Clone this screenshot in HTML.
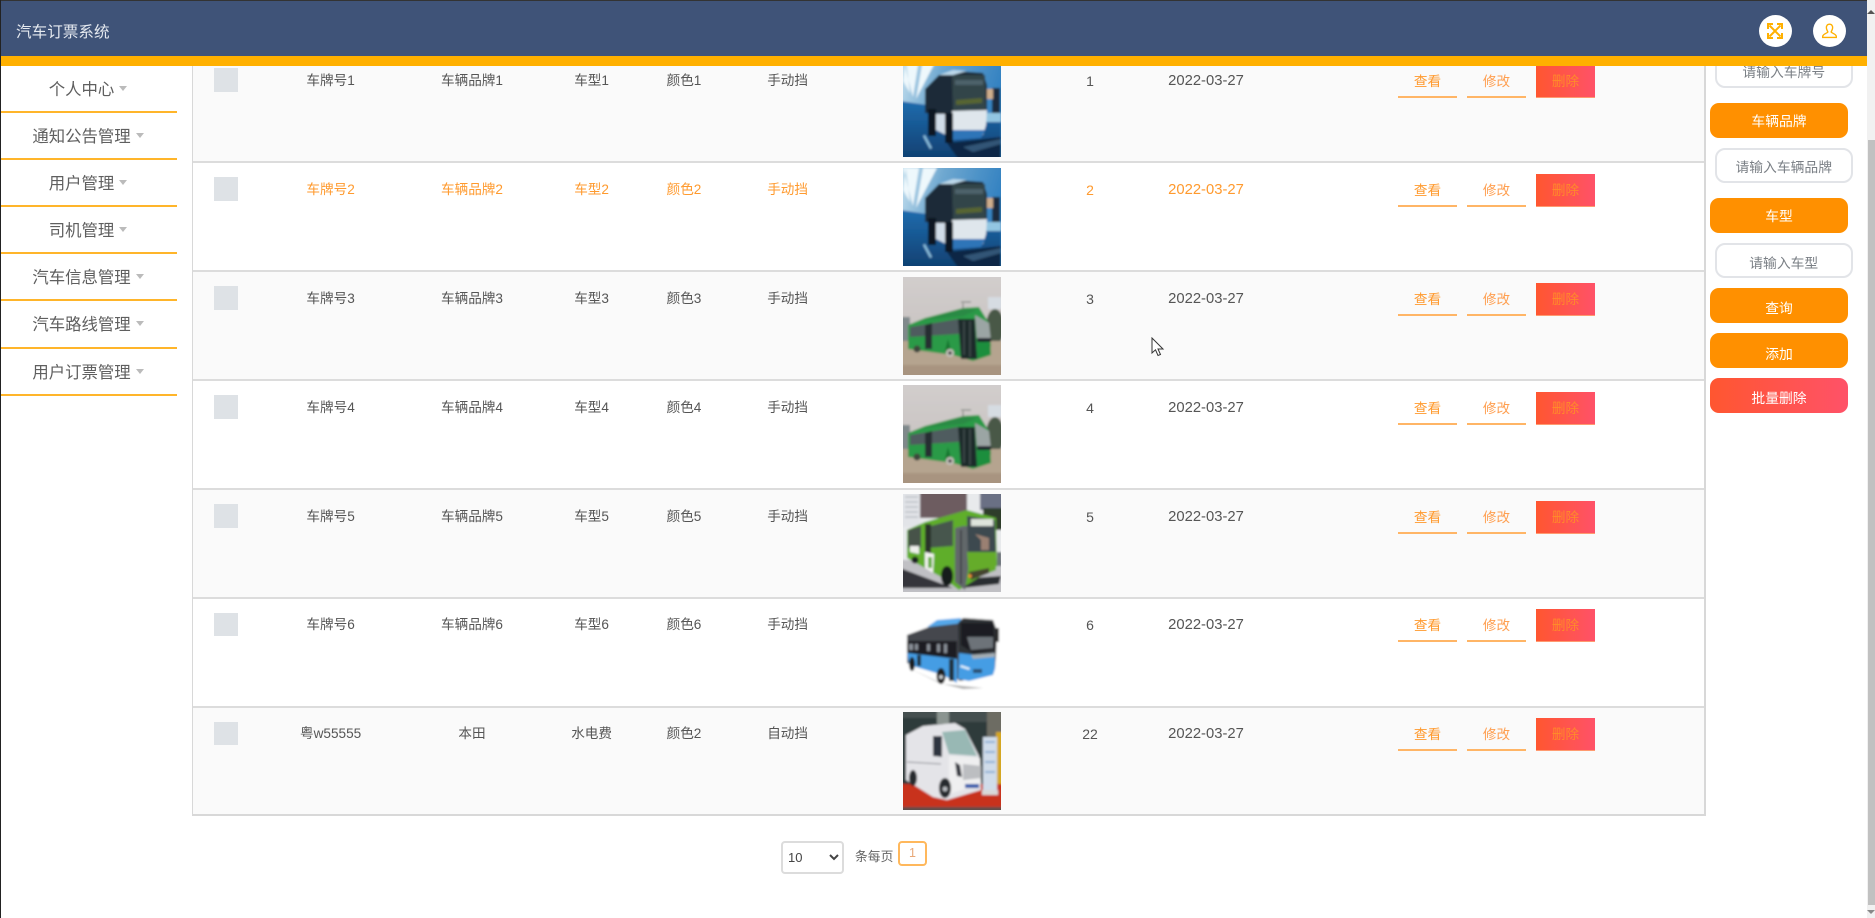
<!DOCTYPE html>
<html lang="zh"><head><meta charset="utf-8"><title>汽车订票系统</title>
<style>
*{box-sizing:border-box}
html,body{margin:0;padding:0;width:1875px;height:918px;overflow:hidden;background:#fff}
body{font-family:"Liberation Sans","Noto Sans CJK SC",sans-serif;color:#555;position:relative}
.ln{position:absolute;left:0;top:0;width:1px;height:918px;background:#222;z-index:6}
.hd{position:absolute;left:0;top:0;width:1867px;height:66px;z-index:5;background:#3f5378;border-top:1px solid #333;border-bottom:10px solid #ffb000}
.title{position:absolute;left:16px;top:22px;font-size:15.6px;line-height:20px;color:#e6eaf0}
.circ{position:absolute;top:14px;width:33px;height:32px;border-radius:50%;background:#fff}
.circ svg{position:absolute;left:8px;top:8px}
.side{position:absolute;left:0;top:65.5px;width:177px}
.side div{height:47.2px;border-bottom:2px solid #ffb52a;text-align:center;font-size:16.4px;line-height:48.5px;color:#5f5f5f;padding-right:1px}
.side i{display:inline-block;width:0;height:0;border:4.5px solid transparent;border-top:5px solid #bbb;border-bottom:0;margin-left:5px;vertical-align:4px}
.tb{position:absolute;left:192px;top:54px;width:1514px;height:762px;border:solid #d8d8d8;border-width:0 2px 2px 1px}
.r{position:absolute;left:0;width:1511px;height:108.9px;border-bottom:2px solid #dcdcdc;font-size:13.6px;background:#fff}
.o{background:#fafafa}
.h{color:#ff9a2e}
.r span{position:absolute;top:16.5px;line-height:20px;text-align:center;white-space:nowrap}
.cb{position:absolute;left:21px;top:14px;width:23.5px;height:23.5px;background:#dee2e6}
.s1{left:77.6px;width:120px}.s2{left:219px;width:120px}.s3{left:339.6px;width:118px}.s4{left:431px;width:120px}.s5{left:534.6px;width:120px}.s6{left:837px;width:120px;font-size:14px}.s7{left:953px;width:120px;font-size:14.8px}
.r svg{position:absolute;left:710px;top:4.4px;width:98px;height:98px}
.b{position:absolute;top:10.6px;height:33px;width:59px;text-align:center;font-size:13.6px;line-height:33px;color:#ff9a2e;border-bottom:2px solid #ffb566}
.b1{left:1205px}.b2{left:1274px;color:#ff9f50}.b3{left:1343px;background:linear-gradient(90deg,#ff5630,#ff5268);color:#ff8a2a;border-bottom:1px solid #ff9a70}
.btn,.inp{position:absolute;text-align:center;font-size:13.8px;white-space:nowrap}
.btn{left:1710px;width:138px;height:35px;border-radius:9px;background:#ff9000;color:#fff}
.inp{left:1715px;width:137.5px;height:35px;border-radius:10px;border:2px solid #e2e4e8;background:#fff;color:#7a7f85}
.sb{position:absolute;left:1867px;top:0;width:8px;height:918px;background:#f1f1f1;z-index:6}
.th{position:absolute;left:1px;top:140px;width:7px;height:765px;background:#c1c1c1}
.pg{position:absolute;left:898px;top:841px;width:29px;height:25px;border:2px solid #ffb85c;border-radius:4px;text-align:center;font-size:12.5px;line-height:21px;color:#e8a878}
select{position:absolute;left:781px;top:841px;width:63px;height:33px;border:2px solid #dcdcdc;border-radius:4px;background:#fff;font-size:13px;color:#444;font-family:"Liberation Sans",sans-serif;padding-left:1px}
</style></head><body>
<div class="ln"></div>
<svg width="0" height="0" style="position:absolute">
<defs>
<filter id="bl" x="-5%" y="-5%" width="110%" height="110%"><feGaussianBlur stdDeviation="1"/></filter>
<clipPath id="cp"><rect width="98" height="98"/></clipPath>
<linearGradient id="sk" x1="0" y1="0" x2="1" y2=".3"><stop offset="0" stop-color="#cfe6f2"/><stop offset=".4" stop-color="#6fa8d0"/><stop offset="1" stop-color="#2f7fc0"/></linearGradient>
<linearGradient id="rd" x1="0" y1="0" x2="0" y2="1"><stop offset="0" stop-color="#1f6cae"/><stop offset="1" stop-color="#0f3f70"/></linearGradient>
<linearGradient id="gr" x1="0" y1="0" x2="0" y2="1"><stop offset="0" stop-color="#d2cecd"/><stop offset="1" stop-color="#c3bdbb"/></linearGradient>

<symbol id="bus1" viewBox="0 0 98 98"><g clip-path="url(#cp)"><g filter="url(#bl)"><rect x="-3" y="-3" width="104" height="104" fill="url(#sk)"/>
<path d="M0 0L10 38 16 0zM20 0L13 40 34 0zM3 0L7 34 0 22z" fill="#eef8fc"/>
<path d="M-3 42L24 46 98 62V101H-3z" fill="url(#rd)"/>
<path d="M44 84L98 78V101H56z" fill="#0d2744"/><path d="M22 76l7 13-2 1-7-13z" fill="#8cc0de"/>
<rect x="89" y="29" width="8" height="26" fill="#1d2c3c"/><rect x="83" y="30" width="7" height="10" fill="#cfae8c"/><rect x="83" y="54" width="15" height="9" fill="#93c6e2"/>
<path d="M22 30L36 16 52 12 80 14 84 26 84 54 50 56 22 54z" fill="#1f2a38"/>
<path d="M36 16L50 11 64 12 50 16z" fill="#bcd8ea"/>
<path d="M49 16H82L83 50 50 53z" fill="#33444a"/><path d="M52 21H80V26H52z" fill="#4e626a"/><path d="M53 41l26-2v5l-26 2z" fill="#566530"/>
<path d="M49 52L84 51 83 66 80 76 50 76z" fill="#dfe6ec"/><path d="M50 71L82 71 78 79 50 81z" fill="#2f74b8"/>
<path d="M33 55H47V78L33 71z" fill="#d0dce8"/><rect x="25" y="50" width="8" height="27" fill="#0b1724"/><rect x="42" y="54" width="8" height="30" fill="#0b1724"/>
<path d="M60 88L98 80V85L70 93z" fill="#5f8fb4" opacity=".45"/></g></g></symbol>

<symbol id="bus2" viewBox="0 0 98 98"><g clip-path="url(#cp)"><g filter="url(#bl)"><rect x="-3" y="-3" width="104" height="104" fill="url(#gr)"/><rect x="85" y="20" width="14" height="12" fill="#d6dce2"/>
<rect x="-3" y="40" width="10" height="24" fill="#80898b"/><ellipse cx="92" cy="50" rx="9" ry="18" fill="#4a5846"/><rect x="-3" y="64" width="104" height="37" fill="#b5a48f"/><rect x="-3" y="88" width="104" height="13" fill="#a89480"/>
<path d="M5 48L22 41 60 31 76 30 86 46 88 78 70 84 50 78 5 72z" fill="#2b9a46"/>
<path d="M7 50L55 42H70V56L7 60z" fill="#505c5e"/><path d="M20 43L60 32 74 33 60 39z" fill="#2a8a44"/>
<path d="M55 42H72L74 82 58 82z" fill="#1f292c"/><path d="M61 44V78M67 44V80" stroke="#424e50" stroke-width="1.4"/>
<path d="M72 38L86 46 88 64 74 64z" fill="#9ba5a4"/><path d="M74 64L88 66 87 78 74 82z" fill="#1f8e3e"/><path d="M74 61H88V65H74z" fill="#1a242c"/>
<path d="M22 48v24h7V46z" fill="#262f30"/><path d="M45 62l-3 12 3 2 3-2z" fill="#15752f"/>
<circle cx="47" cy="76" r="4" fill="#c5c1bc"/><circle cx="47" cy="76" r="1.8" fill="#333"/><circle cx="14" cy="72" r="3.5" fill="#3c463e"/>
<path d="M60 26v6M58 25h10" stroke="#6a736c" stroke-width="1"/></g></g></symbol>

<symbol id="bus3" viewBox="0 0 98 98"><g clip-path="url(#cp)"><g filter="url(#bl)"><rect x="-3" y="-3" width="104" height="104" fill="#e8eaec"/>
<rect x="-3" y="-3" width="20" height="36" fill="#e2e4e8"/><path d="M2 3h13M2 8h13M2 13h13M2 18h13M2 23h13" stroke="#b2b7be" stroke-width="1.2"/>
<rect x="17" y="-3" width="47" height="27" fill="#6d5c60"/><rect x="77" y="-3" width="24" height="19" fill="#6a7084"/><rect x="80" y="14" width="21" height="22" fill="#2e3e2c"/>
<rect x="-3" y="66" width="104" height="35" fill="#c0c0c4"/><path d="M-3 74L50 94 -3 94z" fill="#34353a"/><path d="M40 86L98 82 96 90 60 94z" fill="#2c2d31"/>
<path d="M4 36L22 28 64 16 93 24 94 72 78 82 56 96 40 84 4 64z" fill="#5fae2a"/>
<path d="M24 33L50 26V52L24 54z" fill="#46564e"/><path d="M5 36L18 32V54H5z" fill="#475248"/><path d="M7 52H16V60L7 58z" fill="#eef0ec"/>
<path d="M22 30V66L28 70V30z" fill="#2a322c"/>
<path d="M22 58L31 60 30 79 22 74z" fill="#f4f4f2"/><path d="M25 63h4v11h-4z" fill="#64ad3c"/>
<path d="M52 34L60 32 66 32V70L62 96 52 88z" fill="#62676a"/><path d="M58 36V90" stroke="#2a2e30" stroke-width="1.2"/>
<path d="M64 22L92 26 93 58 65 58z" fill="#3c4a50"/><path d="M68 25h22v7H68z" fill="#dfe4dc"/><path d="M72 40l6 6v10h8V44z" fill="#9a8072"/>
<path d="M64 58H93V76L78 82 66 84z" fill="#65ac2c"/><path d="M66 78l20-4v5L68 86z" fill="#45442e"/><circle cx="67" cy="82" r="1.8" fill="#ea8a30"/>
<ellipse cx="44" cy="82" rx="6" ry="10" fill="#181b1d"/><circle cx="12" cy="66" r="3.5" fill="#1f2223"/><rect x="94" y="58" width="5" height="14" fill="#6a7278"/></g></g></symbol>

<symbol id="bus4" viewBox="0 0 98 98"><g clip-path="url(#cp)"><g filter="url(#bl)"><rect x="-3" y="-3" width="104" height="104" fill="#fff"/>
<path d="M8 66L40 81 80 85 60 86 36 80z" fill="#666" opacity=".5"/>
<path d="M24 24L34 17 58 15 58 22z" fill="#55a8ea"/><path d="M4 32L26 24 60 20 60 78 40 72 4 60z" fill="#45474d"/>
<path d="M4 38L54 38 54 56 4 50z" fill="#1c1e22"/><path d="M6 41h4v6H6zM12 41h3v6h-3zM24 41h3v7h-3zM34 41h3v8h-3zM41 41h3v9h-3z" fill="#8a9098"/>
<path d="M4 50L54 56V80L40 72 6 62z" fill="#459de4"/><path d="M14 52v11h4V52zM46 56v22h5V56z" fill="#22303e"/>
<path d="M60 15L90 17 94 28 93 52 92 66 84 72 56 78 55 20z" fill="#2e3136"/><path d="M58 20H90L92 46 70 50 58 42z" fill="#1d1f23"/><path d="M64 34H90V45L68 47z" fill="#6d7379"/>
<path d="M56 50L72 52 92 50V66L90 72 66 78 55 76z" fill="#459de4"/><path d="M68 52L92 50V54L70 56z" fill="#a4adb4"/><rect x="70" y="66" width="9" height="4" fill="#2f5070"/><path d="M58 62l9 3-1 2-9-3z" fill="#e4f2fb"/>
<ellipse cx="38" cy="73" rx="4.5" ry="8" fill="#1a1b1e"/><circle cx="38" cy="74" r="2" fill="#c8ccd0"/><ellipse cx="9" cy="61" rx="3" ry="7" fill="#1a1b1e"/>
<rect x="92" y="25" width="4" height="14" fill="#2a2a2a"/></g></g></symbol>

<symbol id="bus5" viewBox="0 0 98 98"><g clip-path="url(#cp)"><g filter="url(#bl)"><rect x="-3" y="-3" width="104" height="104" fill="#2f3a3a"/>
<path d="M-3 -3H34V6H-3zM46 -3H86V10H46z" fill="#45504f"/><rect x="34" y="-3" width="12" height="15" fill="#8b9490"/><rect x="84" y="-3" width="17" height="30" fill="#6d6c64"/><rect x="93" y="20" width="8" height="55" fill="#d4a622"/>
<rect x="-3" y="72" width="104" height="24" fill="#c8321c"/><rect x="-3" y="95" width="104" height="6" fill="#5e4e48"/>
<rect x="80" y="25" width="14" height="55" fill="#d0dcea"/><path d="M82 30h10M82 40h10M82 50h10M82 60h10" stroke="#8fb0d4" stroke-width="2"/><rect x="79" y="78" width="16" height="5" fill="#d8d8d8"/>
<path d="M3 23L20 14 52 11 62 17 76 44 78 78 44 88 30 85 3 68z" fill="#e4e4e8"/>
<path d="M39 20L62 18 74 44 46 42z" fill="#98b8b4"/><path d="M30 24h9v21L30 44z" fill="#2d3540"/><path d="M4 50L38 52" stroke="#8a8c92" stroke-width="1"/>
<path d="M46 44L77 46 78 72 46 82z" fill="#efeff0"/><path d="M60 52L78 54V66L60 68z" fill="#bcbec1"/><path d="M52 50l5 3 2 12-5-1z" fill="#343840"/>
<path d="M62 72h14v4H62z" fill="#2e5aac"/><ellipse cx="42" cy="76" rx="6" ry="10" fill="#282a2e"/><circle cx="42" cy="77" r="2.4" fill="#b8bcc0"/><ellipse cx="10" cy="66" rx="4" ry="8" fill="#282a2e"/></g></g></symbol>
</defs></svg>

<div class="hd"><div class="title">汽车订票系统</div>
<div class="circ" style="left:1758.5px"><svg width="16" height="16" viewBox="0 0 16 16" fill="none" stroke="#ffb000" stroke-width="2"><path d="M2.5 2.5L13.5 13.5M13.5 2.5L2.5 13.5M1 6V1H6M10 1H15V6M1 10V15H6M10 15H15V10"/></svg></div>
<div class="circ" style="left:1812.5px"><svg width="17" height="16" viewBox="0 0 21 20" fill="none" stroke="#ffb000" stroke-width="1.7"><path d="M10.5 1.5C7.6 1.5 6.4 3.8 6.6 6.2 6.8 8.6 8 10 8.5 11.2 8.8 12.2 2.8 13.4 2 16.5V18H19V16.5C18.2 13.4 12.2 12.2 12.5 11.2 13 10 14.2 8.6 14.4 6.2 14.6 3.8 13.4 1.5 10.5 1.5Z"/></svg></div></div>

<div class="side">
<div>个人中心<i></i></div><div>通知公告管理<i></i></div><div>用户管理<i></i></div><div>司机管理<i></i></div><div>汽车信息管理<i></i></div><div>汽车路线管理<i></i></div><div>用户订票管理<i></i></div></div>

<div class="tb">
<div class="r o" style="top:.4px"><div class="cb"></div><span class="s1">车牌号1</span><span class="s2">车辆品牌1</span><span class="s3">车型1</span><span class="s4">颜色1</span><span class="s5">手动挡</span><svg viewBox="0 0 98 98"><use href="#bus1"/></svg><span class="s6">1</span><span class="s7">2022-03-27</span><div class="b b1">查看</div><div class="b b2">修改</div><div class="b b3">删除</div></div>
<div class="r h" style="top:109.3px"><div class="cb"></div><span class="s1">车牌号2</span><span class="s2">车辆品牌2</span><span class="s3">车型2</span><span class="s4">颜色2</span><span class="s5">手动挡</span><svg viewBox="0 0 98 98"><use href="#bus1"/></svg><span class="s6">2</span><span class="s7">2022-03-27</span><div class="b b1">查看</div><div class="b b2">修改</div><div class="b b3">删除</div></div>
<div class="r o" style="top:218.2px"><div class="cb"></div><span class="s1">车牌号3</span><span class="s2">车辆品牌3</span><span class="s3">车型3</span><span class="s4">颜色3</span><span class="s5">手动挡</span><svg viewBox="0 0 98 98"><use href="#bus2"/></svg><span class="s6">3</span><span class="s7">2022-03-27</span><div class="b b1">查看</div><div class="b b2">修改</div><div class="b b3">删除</div></div>
<div class="r" style="top:327.1px"><div class="cb"></div><span class="s1">车牌号4</span><span class="s2">车辆品牌4</span><span class="s3">车型4</span><span class="s4">颜色4</span><span class="s5">手动挡</span><svg viewBox="0 0 98 98"><use href="#bus2"/></svg><span class="s6">4</span><span class="s7">2022-03-27</span><div class="b b1">查看</div><div class="b b2">修改</div><div class="b b3">删除</div></div>
<div class="r o" style="top:436px"><div class="cb"></div><span class="s1">车牌号5</span><span class="s2">车辆品牌5</span><span class="s3">车型5</span><span class="s4">颜色5</span><span class="s5">手动挡</span><svg viewBox="0 0 98 98"><use href="#bus3"/></svg><span class="s6">5</span><span class="s7">2022-03-27</span><div class="b b1">查看</div><div class="b b2">修改</div><div class="b b3">删除</div></div>
<div class="r" style="top:544.9px"><div class="cb"></div><span class="s1">车牌号6</span><span class="s2">车辆品牌6</span><span class="s3">车型6</span><span class="s4">颜色6</span><span class="s5">手动挡</span><svg viewBox="0 0 98 98"><use href="#bus4"/></svg><span class="s6">6</span><span class="s7">2022-03-27</span><div class="b b1">查看</div><div class="b b2">修改</div><div class="b b3">删除</div></div>
<div class="r o" style="top:653.8px;height:106.2px;border-bottom:0"><div class="cb"></div><span class="s1">粤w55555</span><span class="s2">本田</span><span class="s3">水电费</span><span class="s4">颜色2</span><span class="s5">自动挡</span><svg viewBox="0 0 98 98"><use href="#bus5"/></svg><span class="s6">22</span><span class="s7">2022-03-27</span><div class="b b1">查看</div><div class="b b2">修改</div><div class="b b3">删除</div></div>
</div>

<div class="inp" style="top:53px;line-height:35px">请输入车牌号</div>
<div class="btn" style="top:103px;line-height:37px">车辆品牌</div>
<div class="inp" style="top:148px;line-height:35px">请输入车辆品牌</div>
<div class="btn" style="top:198px;line-height:37.5px">车型</div>
<div class="inp" style="top:243px;line-height:37px">请输入车型</div>
<div class="btn" style="top:288px;line-height:41.5px">查询</div>
<div class="btn" style="top:333px;line-height:43px">添加</div>
<div class="btn" style="top:378px;line-height:41px;background:linear-gradient(90deg,#ff5630,#ff5268)">批量删除</div>

<select><option>10</option><option>20</option></select>
<div style="position:absolute;left:855px;top:847px;font-size:12.8px;line-height:20px;color:#666">条每页</div>
<div class="pg">1</div>

<svg style="position:absolute;left:1151px;top:337px" width="14" height="21" viewBox="0 0 14 21"><path d="M1 1V16L4.5 12.8 7 18.5 9.5 17.5 7 12H12Z" fill="#fff" stroke="#333" stroke-width="1"/></svg>

<div class="sb"><div class="th"></div>
<svg style="position:absolute;left:0;top:9px" width="8" height="6"><path d="M4 1L8 5H0z" fill="#555"/></svg>
<svg style="position:absolute;left:0;top:909px" width="8" height="6"><path d="M4 5L8 1H0z" fill="#888"/></svg></div>
</body></html>
